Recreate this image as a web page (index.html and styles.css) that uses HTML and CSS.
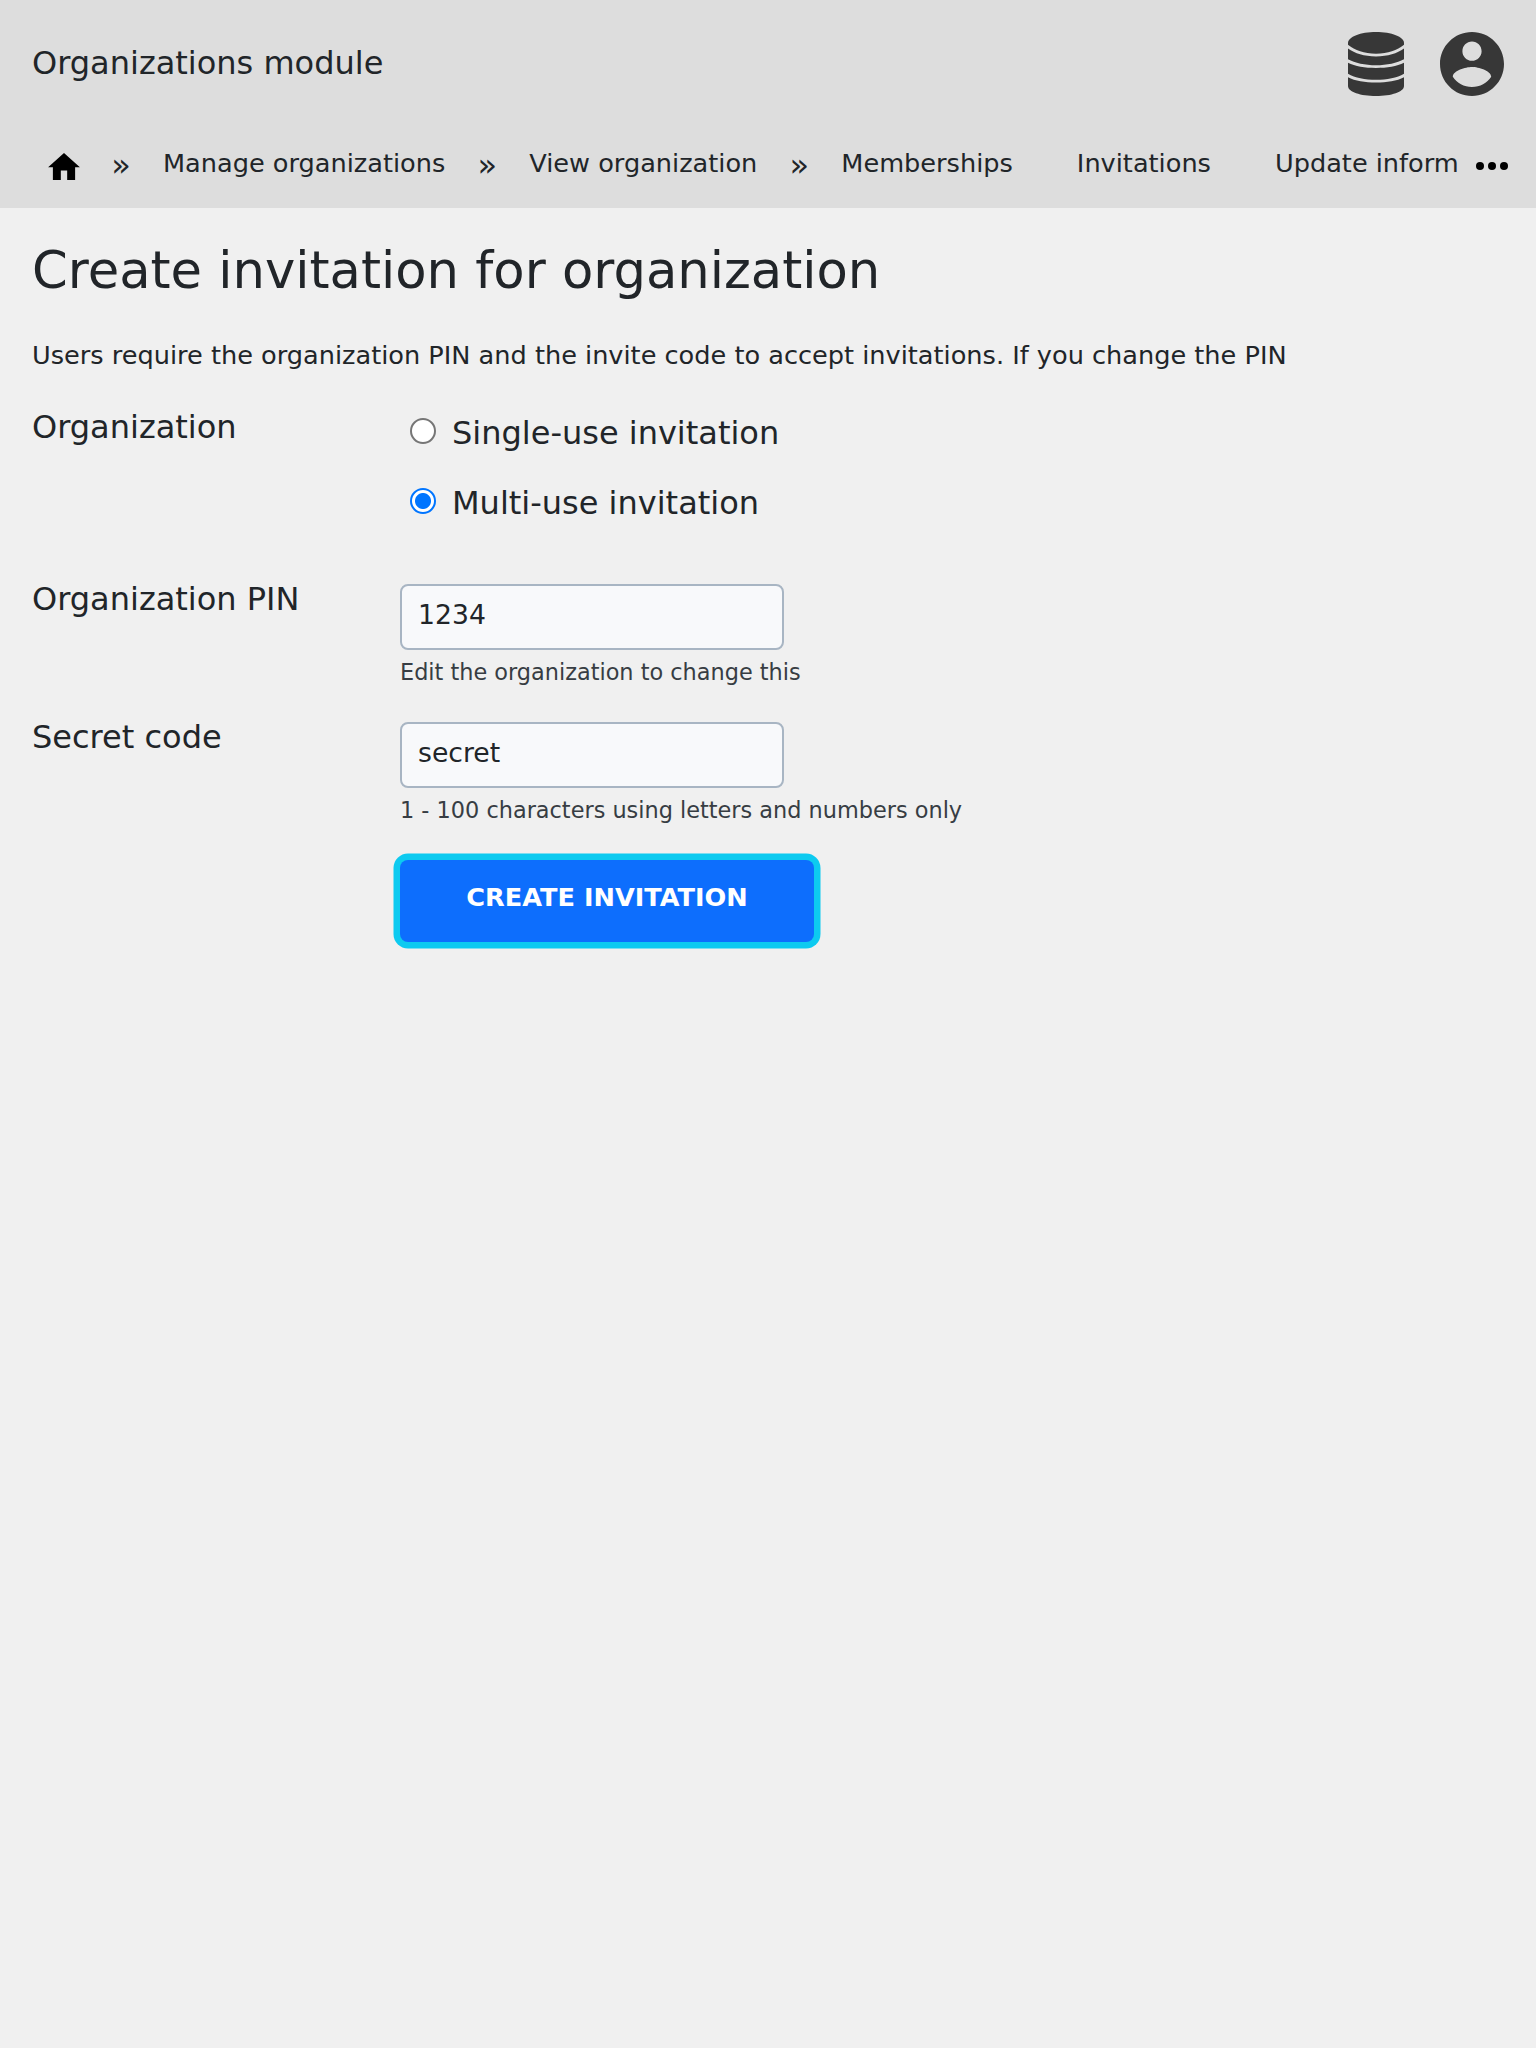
FILE: index.html
```html
<!DOCTYPE html>
<html lang="en">
<head>
<meta charset="utf-8">
<title>Create invitation</title>
<link rel="stylesheet" href="styles.css">
</head>
<body>
<header class="header">
  <div class="topbar">
    <span class="module">Organizations module</span>
    <span class="actions">
      <svg class="db" viewBox="0 0 56 64" aria-hidden="true"><path d="M28 0C43.500 0 56 4.800 56 11V12.800C49 18.500 40 21.700 28 21.700S7 18.500 0 12.800V11C0 4.800 12.500 0 28 0Z"/><path d="M0 16.500C7 21.500 16 24.400 28 24.400S49 21.500 56 16.500V27.200C49 31 39 33.200 28 33.200S7 31 0 27.200Z"/><path d="M0 30.700C7 34.200 17 35.900 28 35.900S49 34.200 56 30.700V41.700C49 46 39 47.700 28 47.700S7 46 0 41.700Z"/><path d="M0 45.200C7 49 17 50.400 28 50.400S49 49 56 45.200V54C56 60 43.500 64 28 64S0 60 0 54Z"/></svg>
      <svg class="user" viewBox="2 2 20 20" aria-hidden="true"><path d="M12 2C6.480 2 2 6.480 2 12s4.480 10 10 10 10-4.480 10-10S17.520 2 12 2zm0 3c1.660 0 3 1.340 3 3s-1.340 3-3 3-3-1.340-3-3 1.340-3 3-3zm0 14.200c-2.500 0-4.710-1.280-6-3.220.030-1.990 4-3.080 6-3.080 1.990 0 5.970 1.090 6 3.080-1.290 1.940-3.500 3.220-6 3.220z"/></svg>
    </span>
  </div>
  <nav class="nav">
    <a class="home"><svg viewBox="2 3 20 17" aria-hidden="true"><path d="M10 20v-6h4v6h5v-8h3L12 3 2 12h3v8z"/></svg></a>
    <span class="sep">»</span>
    <a>Manage organizations</a>
    <span class="sep">»</span>
    <a>View organization</a>
    <span class="sep">»</span>
    <a>Memberships</a>
    <a class="tab">Invitations</a>
    <a class="tab last">Update inform</a>
    <svg class="more" viewBox="0 0 32 8" aria-hidden="true"><circle cx="4" cy="4" r="4"/><circle cx="16" cy="4" r="4"/><circle cx="28" cy="4" r="4"/></svg>
  </nav>
</header>
<main class="main">
  <h1>Create invitation for organization</h1>
  <p class="intro">Users require the organization PIN and the invite code to accept invitations. If you change the PIN</p>
  <form class="form">
    <div class="row types">
      <span class="label">Organization</span>
      <div class="field">
        <label class="option"><input type="radio" name="type"><span>Single-use invitation</span></label>
        <label class="option"><input type="radio" name="type" checked><span>Multi-use invitation</span></label>
      </div>
    </div>
    <div class="row">
      <span class="label">Organization PIN</span>
      <div class="field"><div class="input">1234</div><small>Edit the organization to change this</small></div>
    </div>
    <div class="row">
      <span class="label">Secret code</span>
      <div class="field"><div class="input">secret</div><small>1 - 100 characters using letters and numbers only</small></div>
    </div>
    <button class="submit" type="button">CREATE INVITATION</button>
  </form>
</main>
</body>
</html>
```
FILE: styles.css
```css
* { box-sizing: border-box; }
body { margin: 0; min-height: 2048px; background: #f0f0f0; color: #212529; font-family: "DejaVu Sans", sans-serif; overflow: hidden; }
.header { height: 208px; background: #ddd; }
.topbar { height: 128px; padding: 0 32px; display: flex; align-items: center; justify-content: space-between; }
.module { font-size: 32px; line-height: 48px; margin-top: -2px; }
.actions { display: flex; gap: 36px; fill: #373737; }
.db { width: 56px; height: 64px; }
.user { width: 64px; height: 64px; }
.nav { height: 72px; padding: 0 0 2px 48px; display: flex; align-items: center; font-size: 25.6px; line-height: 40px; white-space: nowrap; }
.home { display: flex; margin: 6px -1px 0 0; }
.home svg { width: 32px; height: 27px; }
.sep { width: 84px; text-align: center; font-size: 32px; margin-top: 4px; }
.tab { margin-left: 64px; }
.more { width: 32px; height: 8px; margin: 5px 0 0 17.500px; }
.main { padding: 24px 32px; }
h1 { margin: 0; font-size: 51.2px; font-weight: 400; line-height: 76px; }
.intro { margin: 28px 0 0; font-size: 25.6px; line-height: 38px; white-space: nowrap; }
.form { margin-top: 32px; }
.row { display: grid; grid-template-columns: 368px 1fr; height: 138px; }
.types { height: 178px; }
.label { font-size: 32px; line-height: 48px; margin-top: -9px; }
.types .label { margin-top: -3px; }
.types .field { margin-top: -8px; }
.option { display: flex; align-items: center; height: 70px; font-size: 32px; }
.option input { appearance: none; width: 26px; height: 26px; margin: 0 16px 4px 10px; border: 2px solid #767676; border-radius: 50%; background: #fff; }
.option input:checked { border-color: #0075ff; background: radial-gradient(circle, #0075ff 7.500px, #fff 8.500px); }
.input { width: 384px; height: 66px; padding: 0 16px; border: 2px solid #a8b5c3; border-radius: 8px; background: #f8f9fb; font-size: 26.67px; line-height: 57px; }
small { display: block; font-size: 22.4px; line-height: 34px; margin-top: 5px; color: #373d43; }
.submit { display: block; width: 414px; height: 82px; margin-left: 368px; padding: 0 0 8px; border: 0; border-radius: 8px; background: #0d6efd; color: #fff; font: bold 25.6px "DejaVu Sans", sans-serif; box-shadow: 0 0 0 6.500px #0dcaf0; }
```
